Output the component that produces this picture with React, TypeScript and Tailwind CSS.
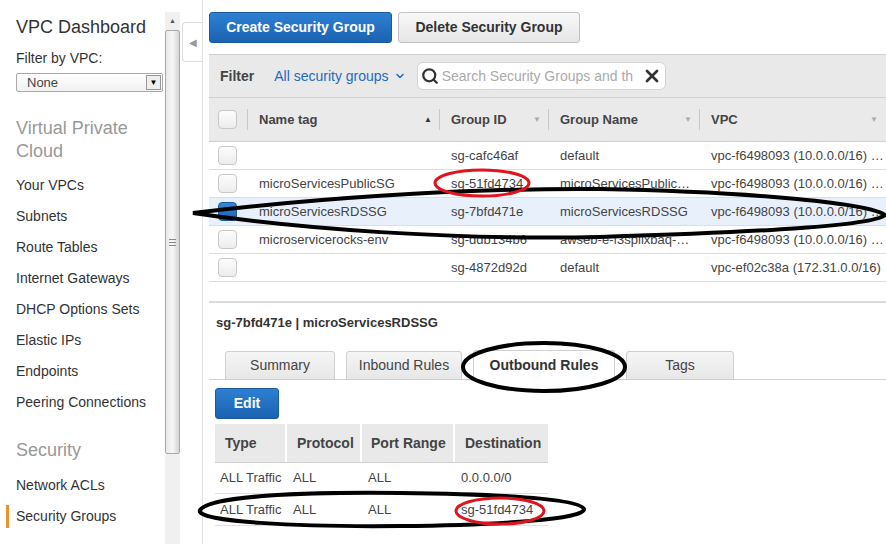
import React from 'react';
import { Search, X, ChevronDown } from 'lucide-react';

const navItems = [
  'Your VPCs',
  'Subnets',
  'Route Tables',
  'Internet Gateways',
  'DHCP Options Sets',
  'Elastic IPs',
  'Endpoints',
  'Peering Connections',
];

const groups = [
  { name: '', id: 'sg-cafc46af', group: 'default', vpc: 'vpc-f6498093 (10.0.0.0/16) …', selected: false },
  { name: 'microServicesPublicSG', id: 'sg-51fd4734', group: 'microServicesPublic…', vpc: 'vpc-f6498093 (10.0.0.0/16) …', selected: false },
  { name: 'microServicesRDSSG', id: 'sg-7bfd471e', group: 'microServicesRDSSG', vpc: 'vpc-f6498093 (10.0.0.0/16) …', selected: true },
  { name: 'microservicerocks-env', id: 'sg-ddb134b6', group: 'awseb-e-f3spllxbaq-…', vpc: 'vpc-f6498093 (10.0.0.0/16) …', selected: false },
  { name: '', id: 'sg-4872d92d', group: 'default', vpc: 'vpc-ef02c38a (172.31.0.0/16)', selected: false },
];

const rules = [
  { type: 'ALL Traffic', proto: 'ALL', range: 'ALL', dest: '0.0.0.0/0' },
  { type: 'ALL Traffic', proto: 'ALL', range: 'ALL', dest: 'sg-51fd4734' },
];

const Checkbox: React.FC<{ checked?: boolean }> = ({ checked }) => (
  <div
    className={
      checked
        ? 'w-[19px] h-[19px] rounded-[4px] border border-[#1a5aa5] bg-gradient-to-b from-[#3a86d6] to-[#1c62b3]'
        : 'w-[19px] h-[19px] rounded-[4px] border border-[#c8c8c8] bg-gradient-to-b from-[#fdfdfd] to-[#ececec]'
    }
  />
);

const HeadCell: React.FC<{ label: string; w: string; arrow: 'up' | 'down'; last?: boolean }> = ({ label, w, arrow, last }) => (
  <div className={`${w} h-full flex items-center relative pl-[11px] pr-[8px]`}>
    <span className="font-bold text-[#444]">{label}</span>
    <span className={arrow === 'up' ? 'ml-auto text-[8px] text-[#333]' : 'ml-auto text-[8px] text-[#aaa]'}>
      {arrow === 'up' ? '▲' : '▼'}
    </span>
    {!last && <div className="absolute right-0 top-[11px] bottom-[11px] w-px bg-[#c9c9c9]" />}
  </div>
);

const Sidebar: React.FC = () => (
  <div className="w-[165px] shrink-0 pl-[16px] text-[#333]">
    <div className="mt-[16px] h-[22px] leading-[22px] text-[18px]">VPC Dashboard</div>
    <div className="mt-[11px] h-[18px] leading-[18px] text-[14px]">Filter by VPC:</div>
    <div className="mt-[6px] w-[147px] h-[19px] border border-[#aaa] rounded-[2px] flex items-center bg-gradient-to-b from-white to-[#f1f1f1]">
      <span className="pl-[10px] text-[13px] text-[#444]">None</span>
      <div className="ml-auto mr-[1px] w-[15px] h-[15px] border border-[#999] bg-[#eee] flex items-center justify-center text-[8px] text-black">▼</div>
    </div>
    <div className="mt-[25px] text-[18px] leading-[23px] text-[#999]">
      Virtual Private
      <br />
      Cloud
    </div>
    <div className="mt-[7px]">
      {navItems.map((n) => (
        <div key={n} className="h-[31px] flex items-center text-[14px] text-[#333]">{n}</div>
      ))}
    </div>
    <div className="mt-[21px] h-[23px] leading-[23px] text-[18px] text-[#999]">Security</div>
    <div className="mt-[8px]">
      <div className="h-[31px] flex items-center text-[14px]">Network ACLs</div>
      <div className="h-[31px] flex items-center text-[14px] relative">
        <div className="absolute left-[-10px] top-[4px] bottom-[4px] w-[3px] bg-[#e8932b]" />
        Security Groups
      </div>
    </div>
  </div>
);

const Scrollbar: React.FC = () => (
  <div className="w-[15px] shrink-0 pt-[12px] flex flex-col bg-white">
    <div className="h-[18px] bg-[#f0f0f0] flex items-center justify-center text-[7px] text-[#555]">▲</div>
    <div className="h-[424px] border border-[#a9a9a9] rounded-[2px] bg-gradient-to-r from-[#e9e9e9] via-[#f7f7f7] to-[#d4d4d4] flex items-center justify-center">
      <div className="w-[7px] flex flex-col gap-[2px]">
        <div className="h-px bg-[#888]" />
        <div className="h-px bg-[#888]" />
        <div className="h-px bg-[#888]" />
      </div>
    </div>
    <div className="flex-1 bg-[#f0f0f0]" />
  </div>
);

const Annotations: React.FC = () => (
  <svg className="absolute inset-0 pointer-events-none" width="886" height="544" viewBox="0 0 886 544" fill="none">
    <path
      d="M193,213 C300,200 450,188 600,189 C760,192 870,204 885,215 C872,226 760,232 600,237 C450,240 300,229 193,213 Z"
      stroke="#000"
      strokeWidth="4"
    />
    <ellipse cx="482" cy="183" rx="47" ry="13" stroke="#e0141e" strokeWidth="3" />
    <ellipse cx="544" cy="367" rx="81" ry="24" stroke="#000" strokeWidth="4" />
    <path
      d="M200,510 C210,496 300,492 400,493 C500,494 580,499 584,509 C586,519 500,525 400,526 C300,527 195,522 200,510 Z"
      stroke="#000"
      strokeWidth="4"
    />
    <ellipse cx="500" cy="511" rx="44" ry="13" stroke="#e0141e" strokeWidth="3" />
  </svg>
);

const App: React.FC = () => {
  return (
    <div className="relative w-[886px] h-[544px] overflow-hidden bg-white font-['Liberation_Sans',Arial,sans-serif] flex">
      <Sidebar />
      <Scrollbar />

      {/* collapse handle */}
      <div className="w-[23px] shrink-0 pt-[22px] pl-[2px] border-r border-[#e3e3e3]">
        <div className="h-[40px] border border-r-0 border-[#ddd] rounded-l-[4px] flex items-center justify-center text-[10px] text-[#999]">◀</div>
      </div>

      <div className="flex-1 pl-[6px] flex flex-col text-[13px] text-[#444]">
        <div className="mt-[12px] flex gap-[6px]">
          <div className="w-[183px] h-[31px] rounded-[3px] border border-[#1a5a9e] bg-gradient-to-b from-[#2e80d3] to-[#1b62b2] flex items-center justify-center text-white font-bold text-[14px]">
            Create Security Group
          </div>
          <div className="w-[182px] h-[31px] rounded-[3px] border border-[#c2c2c2] bg-gradient-to-b from-[#f8f8f8] to-[#e6e6e6] flex items-center justify-center text-[#333] font-bold text-[14px]">
            Delete Security Group
          </div>
        </div>

        <div className="mt-[11px] h-[43px] border-t border-[#cfcfcf] bg-[#e9e9e9] flex items-center">
          <span className="ml-[11px] font-bold text-[14px] text-[#444]">Filter</span>
          <span className="ml-[20px] text-[14px] text-[#1f6bbf]">All security groups</span>
          <ChevronDown size={12} strokeWidth={3} className="ml-[5px] text-[#1f6bbf]" />
          <div className="ml-[11px] w-[249px] h-[28px] rounded-[6px] border border-[#d4d4d4] bg-white flex items-center overflow-hidden">
            <Search size={18} strokeWidth={3} className="ml-[3px] text-[#333] shrink-0" />
            <span className="ml-[3px] text-[14px] text-[#aaa] whitespace-nowrap">Search Security Groups and th</span>
            <X size={20} strokeWidth={3.2} className="ml-auto mr-[3px] text-[#333] shrink-0" />
          </div>
        </div>

        <div className="h-[45px] border-t border-b border-[#d2d2d2] bg-[#eaeaea] flex">
          <div className="w-[39px] h-full flex items-center pl-[9px] relative">
            <Checkbox />
            <div className="absolute right-0 top-[11px] bottom-[11px] w-px bg-[#c9c9c9]" />
          </div>
          <HeadCell label="Name tag" w="w-[192px]" arrow="up" />
          <HeadCell label="Group ID" w="w-[109px]" arrow="down" />
          <HeadCell label="Group Name" w="w-[151px]" arrow="down" />
          <HeadCell label="VPC" w="flex-1" arrow="down" last />
        </div>

        {groups.map((g) => (
          <div key={g.id} className={`h-[28px] flex items-center border-b border-[#dedede] ${g.selected ? 'bg-[#e8f0fb]' : 'bg-white'}`}>
            <div className="w-[39px] pl-[9px]">
              <Checkbox checked={g.selected} />
            </div>
            <div className="w-[192px] pl-[11px] whitespace-nowrap">{g.name}</div>
            <div className="w-[109px] pl-[11px] whitespace-nowrap">{g.id}</div>
            <div className="w-[151px] pl-[11px] whitespace-nowrap">{g.group}</div>
            <div className="flex-1 pl-[11px] whitespace-nowrap">{g.vpc}</div>
          </div>
        ))}

        <div className="mt-[19px] h-[2px] bg-[#dcdcdc]" />

        <div className="mt-[10px] h-[20px] leading-[20px] pl-[7px] font-bold text-[13px] text-[#333]">sg-7bfd471e | microServicesRDSSG</div>

        <div className="mt-[17px] h-[30px] flex items-end border-b border-[#cfcfcf] pl-[16px] gap-[11px]">
          <div className="w-[110px] h-[29px] -mb-px rounded-t-[3px] border border-[#cfcfcf] bg-gradient-to-b from-[#f5f5f5] to-[#e7e7e7] flex items-center justify-center text-[14px] text-[#444]">Summary</div>
          <div className="w-[116px] h-[29px] -mb-px rounded-t-[3px] border border-[#cfcfcf] bg-gradient-to-b from-[#f5f5f5] to-[#e7e7e7] flex items-center justify-center text-[14px] text-[#444]">Inbound Rules</div>
          <div className="w-[142px] h-[30px] -mb-px rounded-t-[3px] border border-b-0 border-[#cfcfcf] bg-white flex items-center justify-center text-[14px] font-bold text-[#333]">Outbound Rules</div>
          <div className="w-[108px] h-[29px] -mb-px rounded-t-[3px] border border-[#cfcfcf] bg-gradient-to-b from-[#f5f5f5] to-[#e7e7e7] flex items-center justify-center text-[14px] text-[#444]">Tags</div>
        </div>

        <div className="mt-[8px] ml-[6px] w-[64px] h-[31px] rounded-[3px] border border-[#1a5a9e] bg-gradient-to-b from-[#2e80d3] to-[#1b62b2] flex items-center justify-center text-white font-bold text-[14px]">
          Edit
        </div>

        <div className="mt-[5px] ml-[6px] w-[333px] text-[13px] text-[#444]">
          <div className="h-[39px] flex bg-[#e9e9e9] border-b border-[#d0d0d0] font-bold text-[14px]">
            <div className="w-[72px] flex items-center pl-[10px] border-r-2 border-white">Type</div>
            <div className="w-[75px] flex items-center pl-[10px] border-r-2 border-white">Protocol</div>
            <div className="w-[93px] flex items-center pl-[9px] border-r-2 border-white">Port Range</div>
            <div className="flex-1 flex items-center pl-[10px]">Destination</div>
          </div>
          {rules.map((r, i) => (
            <div key={i} className={`${i === 0 ? 'h-[31px]' : 'h-[32px]'} flex items-center border-b border-[#e0e0e0]`}>
              <div className="w-[72px] pl-[5px] whitespace-nowrap">{r.type}</div>
              <div className="w-[75px] pl-[6px]">{r.proto}</div>
              <div className="w-[93px] pl-[6px]">{r.range}</div>
              <div className="flex-1 pl-[6px]">{r.dest}</div>
            </div>
          ))}
        </div>
      </div>

      <Annotations />
    </div>
  );
};

export default App;
